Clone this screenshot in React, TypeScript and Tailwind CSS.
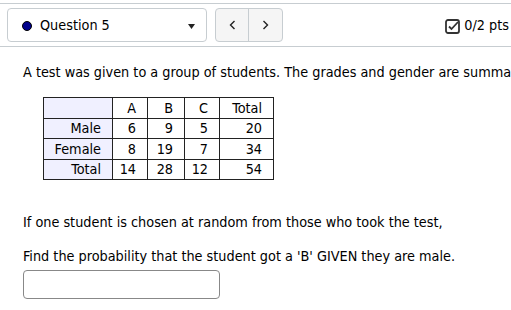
import React from 'react';

const rows = [
  { label: 'Male', a: 6, b: 9, c: 5, total: 20 },
  { label: 'Female', a: 8, b: 19, c: 7, total: 34 },
  { label: 'Total', a: 14, b: 28, c: 12, total: 54 },
];

const cell = 'border border-[#222] h-[20.6px] p-0 pr-[11px] text-right leading-none';

export default function App() {
  return (
    <div
      className="w-[511px] h-[310px] overflow-hidden bg-white text-black text-[14.3px]"
      style={{ fontFamily: '"DejaVu Sans Condensed", Tahoma, sans-serif' }}
    >
      <div className="mt-[3px] border-t border-b border-[#c7cdd1] flex items-center pl-[7px] pr-[2px] py-[4px] gap-2">
        <button className="w-[200px] h-[34px] flex items-center border border-[#c7cdd1] rounded-[4px] bg-white pl-[14px] pr-[11px] pt-[2px]">
          <span className="w-[10px] h-[10px] rounded-full bg-[#00008b] border border-black shrink-0" />
          <span className="ml-[8px]">Question 5</span>
          <svg className="ml-auto" width="7" height="5" viewBox="0 0 7 5">
            <path d="M0 0h7L3.5 5z" fill="#222" />
          </svg>
        </button>
        <div className="flex h-[34px] border border-[#c7cdd1] rounded-[4px] bg-[#f5f5f5]">
          <button className="w-[33px] flex items-center justify-center border-r border-[#c7cdd1]">
            <svg width="7" height="10" viewBox="0 0 7 10">
              <path d="M5.5 1L1.5 5l4 4" fill="none" stroke="#222" strokeWidth="1.4" />
            </svg>
          </button>
          <button className="w-[33px] flex items-center justify-center">
            <svg width="7" height="10" viewBox="0 0 7 10">
              <path d="M1.5 1l4 4-4 4" fill="none" stroke="#222" strokeWidth="1.4" />
            </svg>
          </button>
        </div>
        <div className="ml-auto flex items-center gap-[4px] pt-[2px]">
          <svg width="15" height="15" viewBox="0 0 15 15">
            <rect x="1" y="1" width="13" height="13" rx="2" fill="none" stroke="#333" strokeWidth="1.8" />
            <path d="M4 7.5l2.5 2.5L13 3" fill="none" stroke="#333" strokeWidth="1.8" />
          </svg>
          <span>0/2 pts</span>
        </div>
      </div>

      <div className="pl-[23px] pt-[15px]">
        <p className="whitespace-nowrap leading-[20px]">
          A test was given to a group of students. The grades and gender are summarized below
        </p>

        <table className="mt-[15px] ml-[20px] border-collapse">
          <tbody>
            <tr>
              <td className={`${cell} w-[69px] bg-[#f0f0ff]`}></td>
              <td className={`${cell} w-[35px]`}>A</td>
              <td className={`${cell} w-[37px]`}>B</td>
              <td className={`${cell} w-[35px]`}>C</td>
              <td className={`${cell} w-[54px]`}>Total</td>
            </tr>
            {rows.map((r) => (
              <tr key={r.label}>
                <td className={`${cell} bg-[#f0f0ff]`}>{r.label}</td>
                <td className={cell}>{r.a}</td>
                <td className={cell}>{r.b}</td>
                <td className={cell}>{r.c}</td>
                <td className={cell}>{r.total}</td>
              </tr>
            ))}
          </tbody>
        </table>

        <p className="mt-[32px] leading-[20px] whitespace-nowrap">
          If one student is chosen at random from those who took the test,
        </p>
        <p className="mt-[14px] leading-[20px] whitespace-nowrap">
          Find the probability that the student got a 'B' GIVEN they are male.
        </p>
        <input
          type="text"
          className="mt-[4px] block w-[197px] h-[29px] border border-[#888] rounded-[4px] bg-white outline-none"
        />
      </div>
    </div>
  );
}
